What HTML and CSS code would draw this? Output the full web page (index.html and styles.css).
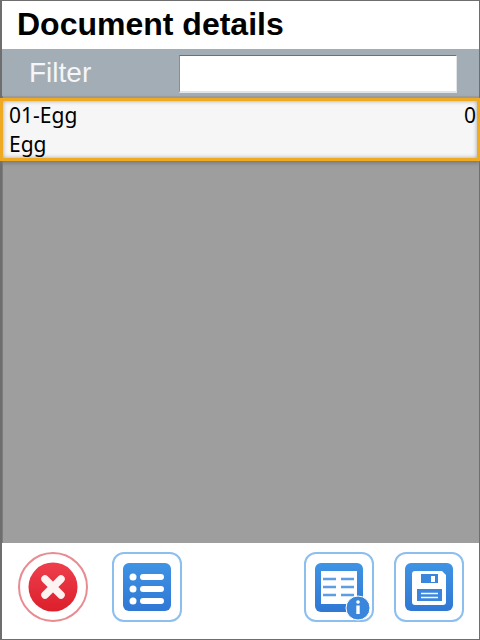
FILE: index.html
```html
<!DOCTYPE html>
<html lang="en">
<head>
    <meta charset="UTF-8">
    <meta name="viewport" content="width=device-width, initial-scale=1.0">
    <title>Document details</title>
    <link rel="stylesheet" href="styles.css">
</head>
<body>
    <section class="window">
        <header class="title">Document details</header>
        <div class="filter">
            <label class="filter-label" for="filter">Filter</label>
            <input class="filter-input" id="filter" type="text">
        </div>
        <div class="list">
            <div class="row">
                <div class="row-top">
                    <span>01-Egg</span>
                    <span>0</span>
                </div>
                <div class="row-bottom">Egg</div>
            </div>
        </div>
        <footer class="toolbar">
            <div class="btn btn-round">
                <svg width="50" height="50" viewBox="0 0 50 50">
                    <defs>
                        <linearGradient id="red" x1="0" y1="0" x2="0" y2="1">
                            <stop offset="0" stop-color="#ee3f4d"/>
                            <stop offset="1" stop-color="#dc1f2b"/>
                        </linearGradient>
                    </defs>
                    <circle cx="25" cy="25" r="24.5" fill="url(#red)"/>
                    <path d="M17 17L33 33M33 17L17 33" stroke="#fdf3f3" stroke-width="7.5" stroke-linecap="round"/>
                </svg>
            </div>
            <div class="btn">
                <svg width="48" height="48" viewBox="0 0 48 48">
                    <defs>
                        <linearGradient id="blue" x1="0" y1="0" x2="0" y2="1">
                            <stop offset="0" stop-color="#3f93e4"/>
                            <stop offset="1" stop-color="#2f78d4"/>
                        </linearGradient>
                    </defs>
                    <rect width="48" height="48" rx="6" fill="url(#blue)"/>
                    <circle cx="10" cy="14" r="3.500" fill="#fff"/>
                    <circle cx="10" cy="26" r="3.500" fill="#fff"/>
                    <circle cx="10" cy="38" r="3.500" fill="#fff"/>
                    <path d="M20 14H38M20 26H38M20 38H38" stroke="#fff" stroke-width="6" stroke-linecap="round"/>
                </svg>
            </div>
            <div class="spacer"></div>
            <div class="btn">
                <svg class="icon-over" width="58" height="58" viewBox="0 0 58 58">
                    <rect width="48" height="49" rx="6" fill="url(#blue)"/>
                    <rect x="6" y="8" width="36" height="33" fill="#fff"/>
                    <path d="M8 16H21M26 16H39M8 24H21M26 24H39M8 32H21M26 32H39" stroke="#5c9de4" stroke-width="2.600"/>
                    <circle cx="43" cy="45" r="12" fill="#3a86dc" stroke="#fff" stroke-width="1"/>
                    <circle cx="43" cy="39" r="1.800" fill="#fff"/>
                    <path d="M43 42.500V51" stroke="#fff" stroke-width="3.400"/>
                </svg>
            </div>
            <div class="btn btn-last">
                <svg width="48" height="48" viewBox="0 0 48 48">
                    <rect width="48" height="48" rx="6" fill="url(#blue)"/>
                    <path d="M10 8H37L41 12V39Q41 42 38 42H10Q7 42 7 39V11Q7 8 10 8Z" fill="#fff"/>
                    <rect x="16" y="11" width="17" height="9" fill="#3a86dc"/>
                    <rect x="26" y="13" width="4" height="6" fill="#fff"/>
                    <rect x="12" y="26" width="25" height="12" fill="#3a86dc"/>
                    <path d="M16 30.500H33M16 34.500H33" stroke="#fff" stroke-width="1.300"/>
                </svg>
            </div>
        </footer>
    </section>
</body>
</html>
```

FILE: styles.css
```css
*{
    margin: 0;
    padding: 0;
    box-sizing: border-box;
}
html, body{
    width: 480px;
    height: 640px;
    overflow: hidden;
}
.window{
    width: 480px;
    height: 640px;
    display: flex;
    flex-direction: column;
    background-color: #fff;
    border: solid #6e6e6e;
    border-width: 1px 1px 1px 2px;
    font-family: "Liberation Sans", Arial, sans-serif;
}
.title{
    height: 48px;
    padding-left: 15px;
    line-height: 47px;
    font-size: 32px;
    font-weight: bold;
    color: #000;
}
.filter{
    height: 47px;
    display: flex;
    align-items: flex-start;
    background-color: #a3adb6;
}
.filter-label{
    width: 177px;
    padding-left: 27px;
    line-height: 47px;
    font-size: 28px;
    color: #f4f6f8;
}
.filter-input{
    width: 278px;
    height: 38px;
    margin-top: 6px;
    background-color: #fff;
    border: solid #e2e5e8;
    border-width: 1px 1px 2px 1px;
    border-top-color: #6f6f6f;
    border-left-color: #8d8d8d;
}
.list{
    flex: 1;
    padding-top: 2px;
    background-color: #9e9e9e;
    border-left: 1px solid #7d7d7d;
}
.row{
    height: 63px;
    margin-right: -1px;
    margin-left: -3px;
    padding: 2px 1px 0 6px;
    background-color: #f6f6f7;
    border: 3px solid #eeaa22;
    box-shadow: inset 0 0 4px #a0a0a0, 0 2px 4px #777;
    font-family: "Noto Sans", sans-serif;
    font-size: 21px;
    color: #000;
}
.row-top{
    display: flex;
    justify-content: space-between;
    height: 29px;
    line-height: 25px;
}
.row-bottom{
    line-height: 25px;
}
.toolbar{
    height: 96px;
    display: flex;
    align-items: flex-start;
    padding: 9px 0 0 16px;
    background-color: #fff;
}
.btn{
    width: 70px;
    height: 70px;
    display: flex;
    align-items: center;
    justify-content: center;
    margin-right: 24px;
    position: relative;
    background-color: #fff;
    border: 2px solid #8dbfee;
    border-radius: 12px;
}
.btn-round{
    border-color: #e98c92;
    border-radius: 50%;
}
.btn-last{
    margin-right: 0;
    margin-left: -4px;
}
.spacer{
    width: 98px;
}
.icon-over{
    position: absolute;
    top: 9px;
    left: 9px;
}
```
